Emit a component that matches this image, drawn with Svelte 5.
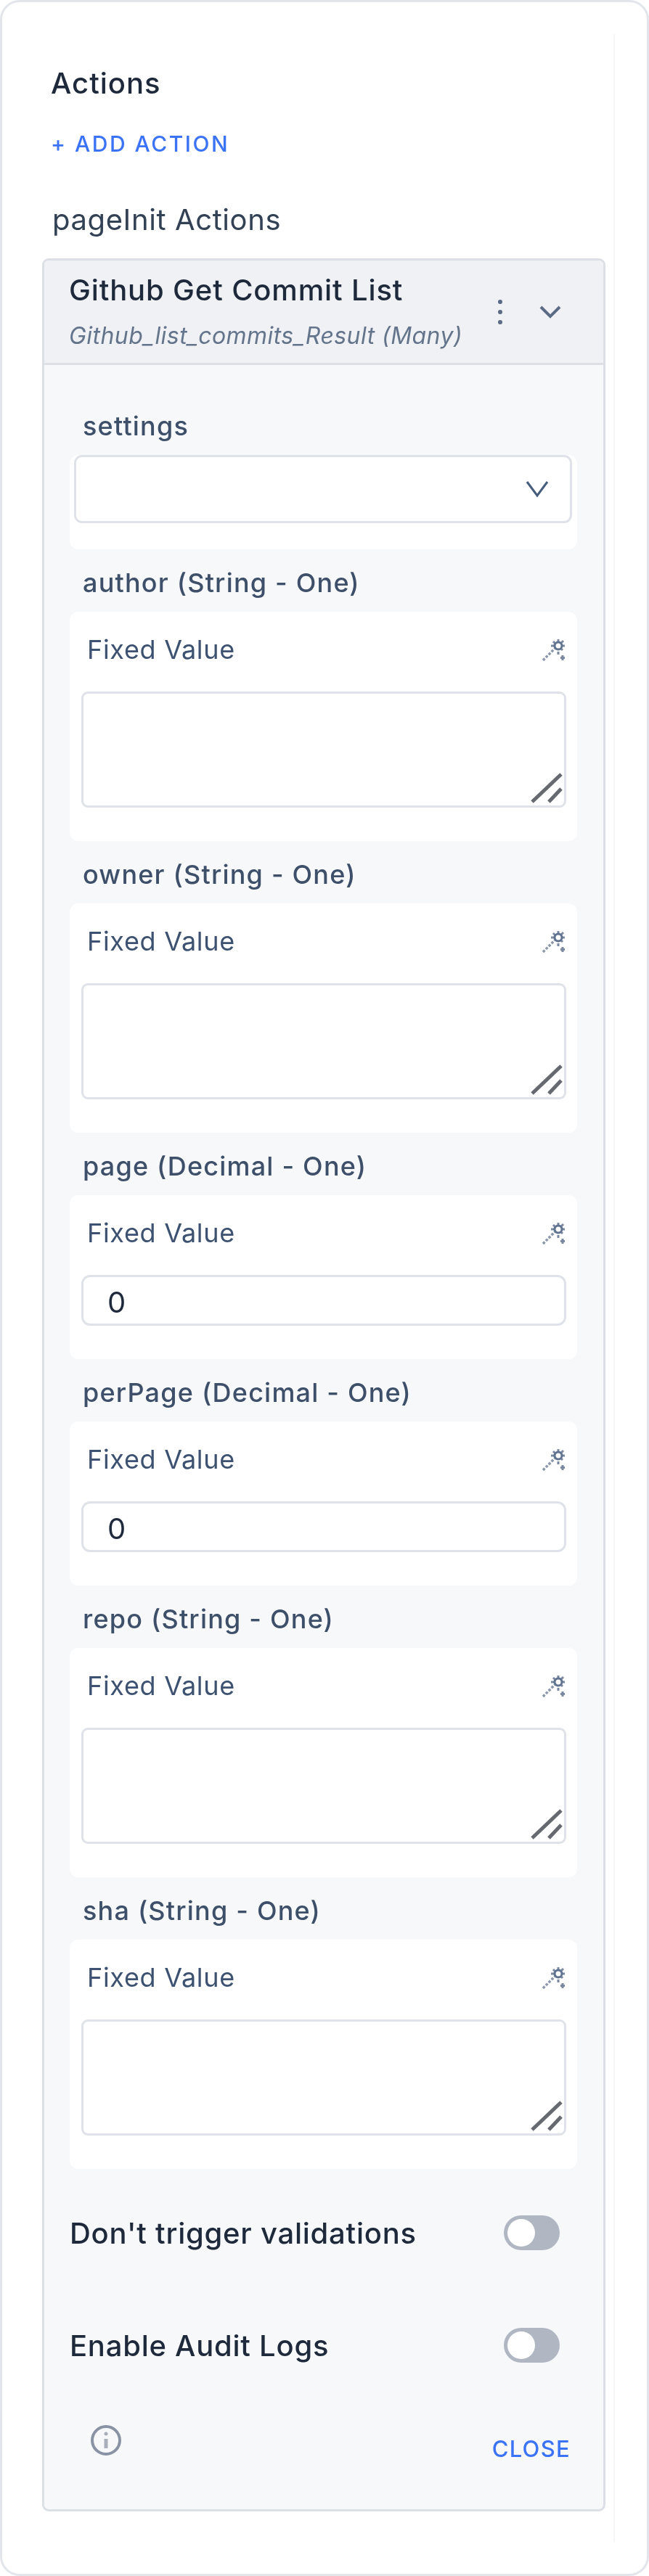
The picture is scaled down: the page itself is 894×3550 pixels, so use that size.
<script>
  const fields = [
    { label: 'author (String - One)', multi: true },
    { label: 'owner (String - One)', multi: true },
    { label: 'page (Decimal - One)', multi: false },
    { label: 'perPage (Decimal - One)', multi: false },
    { label: 'repo (String - One)', multi: true },
    { label: 'sha (String - One)', multi: true }
  ];
  const toggles = ["Don't trigger validations", 'Enable Audit Logs'];
</script>

<div class="panel">
  <div class="scroll">
    <h2 class="title">Actions</h2>
    <div class="add">+ ADD ACTION</div>
    <h3 class="sub">pageInit Actions</h3>

    <section class="card">
      <header class="head">
        <div class="head-text">
          <div class="name">Github Get Commit List</div>
          <div class="type">Github_list_commits_Result (Many)</div>
        </div>
        <svg class="dots" width="8" height="36" viewBox="0 0 8 36"><circle cx="4" cy="4" r="3"/><circle cx="4" cy="18" r="3"/><circle cx="4" cy="32" r="3"/></svg>
        <svg class="chev" width="30" height="18" viewBox="0 0 30 18"><path d="M2 2l13 13L28 2"/></svg>
      </header>

      <div class="body">
        <div class="label first">settings</div>
        <div class="box select-box">
          <div class="select">
            <svg class="select-chev" width="32" height="24" viewBox="0 0 32 24"><path d="M2 2l14 19L30 2"/></svg>
          </div>
        </div>

        {#each fields as f}
          <div class="label">{f.label}</div>
          <div class="box">
            <div class="box-head">
              <span class="fixed">Fixed Value</span>
              <svg class="wand" width="34" height="34" viewBox="0 0 34 34">
                <path class="wand-stick" d="M2 32L20 14"/>
                <path class="wand-star" d="M23 3v5M23 20v4M13 12h5M28 12h4M16 6l3 3M30 5l-3 3M29 18l-3-3"/>
                <circle class="wand-head" cx="23" cy="12" r="5"/>
                <path class="wand-star" d="M29 25v7M26 28.500h6"/>
              </svg>
            </div>
            {#if f.multi}
              <div class="area">
                <svg class="grip" width="44" height="42" viewBox="0 0 44 42"><path d="M2 40L42 2M25 40L42 22"/></svg>
              </div>
            {:else}
              <div class="input">0</div>
            {/if}
          </div>
        {/each}

        {#each toggles as t, i}
          <div class="toggle-row" class:first-toggle={i === 0}>
            <span class="toggle-label">{t}</span>
            <span class="toggle"><span class="knob"></span></span>
          </div>
        {/each}

        <div class="foot">
          <svg class="info" width="44" height="44" viewBox="0 0 44 44">
            <circle cx="22" cy="22" r="19"/>
            <path d="M22 20v13"/>
            <circle class="info-dot" cx="22" cy="13" r="2.500"/>
          </svg>
          <span class="close">CLOSE</span>
        </div>
      </div>
    </section>
  </div>
</div>

<style>
  :global(body) {
    margin: 0;
    background: #fff;
  }
  .panel {
    width: 894px;
    height: 3550px;
    box-sizing: border-box;
    border: 3px solid #e2e5ea;
    border-radius: 27px;
    background: #fff;
    padding: 44px 0 0 0;
    font-family: Inter, "Liberation Sans", sans-serif;
    color: #1e293b;
    filter: blur(0.7px);
  }
  .scroll {
    width: 844px;
    height: 3456px;
    box-sizing: border-box;
    border-right: 2px solid #f6f7f9;
    padding: 44px 0 0 55px;
  }
  .title {
    margin: 0;
    padding-left: 12px;
    font-size: 40px;
    line-height: 48px;
    font-weight: 500;
    letter-spacing: 1px;
    color: #1e293b;
  }
  .add {
    margin-top: 41px;
    padding-left: 12px;
    font-size: 30px;
    line-height: 36px;
    font-weight: 500;
    letter-spacing: 2.500px;
    color: #3b73f6;
  }
  .sub {
    margin: 63px 0 0 0;
    padding-left: 14px;
    font-size: 40px;
    line-height: 48px;
    font-weight: 400;
    letter-spacing: 0.600px;
    color: #334155;
  }
  .card {
    margin-top: 29px;
    width: 776px;
    height: 3105px;
    box-sizing: border-box;
    border: 3px solid #dcdfe6;
    border-radius: 9px;
    background: #f7f8fa;
    overflow: hidden;
  }
  .head {
    display: flex;
    align-items: center;
    height: 144px;
    box-sizing: border-box;
    background: #f0f1f4;
    border-bottom: 3px solid #dcdfe6;
    padding: 0 0 0 34px;
  }
  .head-text {
    width: 590px;
  }
  .name {
    font-size: 40px;
    line-height: 48px;
    font-weight: 500;
    letter-spacing: 0.850px;
    color: #1e293b;
  }
  .type {
    margin-top: 19px;
    font-size: 32px;
    line-height: 40px;
    font-style: italic;
    letter-spacing: 0.450px;
    color: #64748b;
  }
  .dots {
    fill: #5b6b85;
  }
  .chev {
    margin-left: 50px;
    fill: none;
    stroke: #5b6b85;
    stroke-width: 4;
  }
  .body {
    padding: 0 35px;
  }
  .label {
    margin: 22px 0 0 18px;
    height: 48px;
    font-size: 36px;
    line-height: 48px;
    font-weight: 500;
    letter-spacing: 1.200px;
    color: #3d4f69;
  }
  .label.first {
    margin-top: 60px;
  }
  .box {
    width: 699px;
    margin-top: 16px;
    box-sizing: border-box;
    background: #fff;
    border-radius: 12px;
    padding: 30px 15px 46px 16px;
  }
  .select-box {
    padding: 0 7px 36px 6px;
  }
  .select {
    height: 94px;
    box-sizing: border-box;
    border: 3px solid #dfe2e8;
    border-radius: 11px;
    background: #fff;
    display: flex;
    align-items: center;
    justify-content: flex-end;
    padding-right: 29px;
  }
  .select-chev {
    fill: none;
    stroke: #475d7c;
    stroke-width: 3;
  }
  .box-head {
    display: flex;
    align-items: center;
    justify-content: space-between;
    height: 44px;
    padding-left: 8px;
  }
  .fixed {
    font-size: 36px;
    line-height: 44px;
    letter-spacing: 0.700px;
    color: #3d5170;
  }
  .wand {
    fill: none;
  }
  .wand-stick {
    stroke: #8d98aa;
    stroke-width: 3.500;
    stroke-dasharray: 3.500 2;
  }
  .wand-star {
    stroke: #7a89a1;
    stroke-width: 3;
  }
  .wand-head {
    stroke: #5f7391;
    stroke-width: 3;
  }
  .area {
    margin-top: 36px;
    height: 160px;
    box-sizing: border-box;
    border: 3px solid #dfe2e8;
    border-radius: 9px;
    position: relative;
    background: #fff;
  }
  .grip {
    position: absolute;
    right: 2px;
    bottom: 3px;
    fill: none;
    stroke: #666a70;
    stroke-width: 5;
  }
  .input {
    margin-top: 36px;
    height: 70px;
    box-sizing: border-box;
    border: 3px solid #dfe2e8;
    border-radius: 12px;
    background: #fff;
    padding-left: 33px;
    font-size: 40px;
    line-height: 70px;
    color: #1e293b;
  }
  .toggle-row {
    display: flex;
    align-items: center;
    justify-content: space-between;
    height: 48px;
    margin-top: 107px;
    width: 675px;
  }
  .toggle-row.first-toggle {
    margin-top: 64px;
  }
  .toggle-label {
    font-size: 40px;
    font-weight: 500;
    letter-spacing: 0.750px;
    color: #1e293b;
  }
  .toggle {
    width: 77px;
    height: 48px;
    box-sizing: border-box;
    border-radius: 24px;
    background: #b0b6c2;
    padding: 5px;
    display: block;
  }
  .knob {
    display: block;
    width: 38px;
    height: 38px;
    border-radius: 50%;
    background: #fff;
  }
  .foot {
    display: flex;
    align-items: flex-start;
    justify-content: space-between;
    width: 690px;
    margin-top: 85px;
    padding-left: 28px;
    box-sizing: border-box;
  }
  .info {
    fill: none;
    stroke: #8a93a3;
    stroke-width: 4;
  }
  .info path {
    stroke: #a8afbb;
    stroke-width: 5;
  }
  .info-dot {
    fill: #a8afbb;
    stroke: none;
  }
  .close {
    margin-top: 15px;
    font-size: 31px;
    line-height: 38px;
    font-weight: 500;
    letter-spacing: 1.300px;
    color: #3b73f6;
  }
</style>
